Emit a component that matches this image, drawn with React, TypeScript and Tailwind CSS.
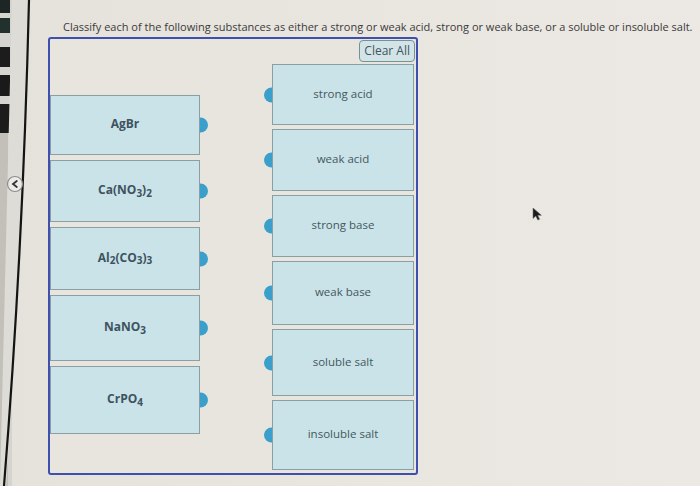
import type { ReactNode } from 'react'

type Item = { label: ReactNode; h: string }

const compounds: Item[] = [
  { label: 'AgBr', h: 'h-[60px]' },
  { label: <>Ca(NO<sub>3</sub>)<sub>2</sub></>, h: 'h-[62px]' },
  { label: <>Al<sub>2</sub>(CO<sub>3</sub>)<sub>3</sub></>, h: 'h-[63px]' },
  { label: <>NaNO<sub>3</sub></>, h: 'h-[66px]' },
  { label: <>CrPO<sub>4</sub></>, h: 'h-[68px]' },
]

const categories: Item[] = [
  { label: 'strong acid', h: 'h-[61px]' },
  { label: 'weak acid', h: 'h-[62px]' },
  { label: 'strong base', h: 'h-[62px]' },
  { label: 'weak base', h: 'h-[64px]' },
  { label: 'soluble salt', h: 'h-[67px]' },
  { label: 'insoluble salt', h: 'h-[70px]' },
]

// window edge on the left: sidebar blocks, frame line and collapse handle
function EdgeStrip() {
  return (
    <svg className="absolute left-0 top-0" width="40" height="486" viewBox="0 0 40 486">
      <rect x="0" y="0" width="12" height="486" fill="#d6d4cf" />
      <rect x="0" y="133" width="8" height="353" fill="#c3c0ba" />
      <rect x="0" y="0" width="10" height="13" fill="#1d2624" />
      <rect x="0" y="18" width="10" height="15" fill="#22302e" />
      <rect x="0" y="47" width="10" height="20" fill="#1c1c1c" />
      <rect x="0" y="75" width="10" height="21" fill="#1a1a1a" />
      <rect x="0" y="104" width="10" height="29" fill="#1c1c1c" />
      <path d="M12 0 L30 0 Q23 250 6 486 L0 486 Z" fill="#dedcd7" />
      <path d="M29 0 Q23 250 4 486" stroke="#141414" strokeWidth="2.2" fill="none" />
      <circle cx="15" cy="184" r="7.5" fill="#ecebe8" stroke="#8d8d8d" strokeWidth="1.2" />
      <path d="M16.8 181 L13 184 L16.8 187" stroke="#333" strokeWidth="1.8" fill="none" strokeLinecap="round" />
    </svg>
  )
}

function Cursor() {
  return (
    <svg className="absolute left-[532px] top-[207px]" width="12" height="14" viewBox="0 0 12 14">
      <path d="M1 1 L1 11.5 L3.8 9 L5.8 13 L7.6 12.2 L5.7 8.3 L9.4 8.3 Z" fill="#1a1a1a" stroke="#6b6b6b" strokeWidth="0.6" />
    </svg>
  )
}

export default function App() {
  return (
    <div className="relative w-[700px] h-[486px] overflow-hidden bg-gradient-to-r from-[#e5e2db] via-[#e9e6e0] to-[#ece9e4] font-['Open_Sans',sans-serif]">
      <EdgeStrip />
      <Cursor />

      <p className="pl-[63px] pt-[19px] text-[11px] leading-[16px] text-[#3a3a3a]">
        Classify each of the following substances as either a strong or weak acid, strong or weak base, or a soluble or insoluble salt.
      </p>

      <div className="ml-[48px] mt-[2px] w-[370px] h-[438px] border-2 border-[#3e4fae] rounded-[3px] bg-[#e8e5de]">
        <div className="flex justify-end pt-[1px] pr-[1px]">
          <button className="h-[22px] px-[4px] text-[12px] text-[#3d5662] bg-[#d3e4e7] border border-[#73919b] rounded-[4px]">
            Clear All
          </button>
        </div>

        <div className="flex justify-between mt-[2px]">
          <div className="mt-[31px] w-[150px] flex flex-col gap-[5px]">
            {compounds.map((c, i) => (
              <div
                key={i}
                className={`relative ${c.h} flex items-center justify-center bg-[#c9e3e8] border border-[#8a9ea4] text-[12px] font-bold text-[#3e5260] [&_sub]:text-[10px]`}
              >
                <span className="-mt-[2px]">{c.label}</span>
                <span className="absolute -right-[9px] top-1/2 -translate-y-1/2 w-[8px] h-[15px] rounded-r-full bg-[#3a9fcb]" />
              </div>
            ))}
          </div>

          <div className="mr-[2px] w-[142px] flex flex-col gap-[4px]">
            {categories.map((c, i) => (
              <div
                key={i}
                className={`relative ${c.h} flex items-center justify-center bg-[#c9e3e8] border border-[#8a9ea4] text-[11.5px] text-[#46575f]`}
              >
                <span className="-mt-[2px]">{c.label}</span>
                <span className="absolute -left-[9px] top-1/2 -translate-y-1/2 w-[8px] h-[15px] rounded-l-full bg-[#3a9fcb]" />
              </div>
            ))}
          </div>
        </div>
      </div>
    </div>
  )
}
